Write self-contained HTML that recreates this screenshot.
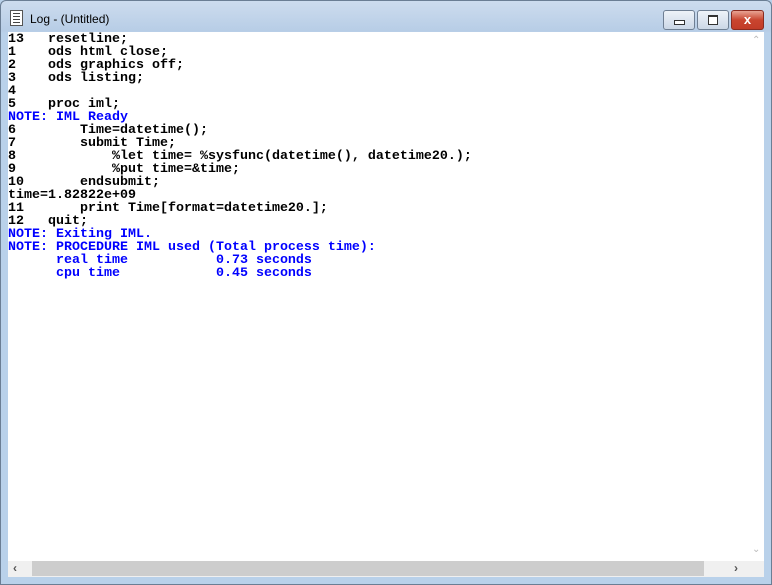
<!DOCTYPE html>
<html><head><style>
body{margin:0;width:772px;height:585px;overflow:hidden;background:#b9d1ea;position:relative;font-family:"Liberation Sans",sans-serif}
.frame{position:absolute;left:0;top:0;width:770px;height:583px;border:1px solid #6b7e94;border-radius:6px 6px 0 0;background:linear-gradient(#cddcee 0,#b7cde6 30px,#b9d1ea 32px)}
.title{position:absolute;left:30px;top:12px;font-size:12px;color:#000}
.ico{position:absolute;left:10px;top:10px;width:11px;height:14px;background:#fff;border:1px solid #555}
.ico i{position:absolute;left:2px;width:7px;height:1px;background:#444}
.btn{position:absolute;top:10px;height:18px;border:1px solid #6f7f93;border-radius:3px;background:linear-gradient(#eef3f9,#cbd7e6)}
.content{position:absolute;left:8px;top:32px;width:740px;height:529px;background:#fff}
pre{margin:0;position:absolute;left:8px;top:33px;font-family:"Liberation Mono",monospace;font-size:13.33px;line-height:13px;color:#000;font-weight:bold}
.b{color:#0000ff}
.vs{position:absolute;left:748px;top:32px;width:16px;height:529px;background:#fff}
.hs{position:absolute;left:8px;top:561px;width:740px;height:16px;background:#f0f0f0}
.thumb{position:absolute;left:24px;top:0;width:672px;height:15px;background:#cdcdcd}
.corner{position:absolute;left:748px;top:561px;width:16px;height:16px;background:#f0f0f0}
</style></head><body>
<div class="frame"></div>
<div class="ico"><i style="top:2px"></i><i style="top:5px"></i><i style="top:8px"></i><i style="top:11px"></i></div>
<div class="title">Log - (Untitled)</div>
<div class="btn" style="left:663px;width:30px"><div style="position:absolute;left:10px;top:9px;width:9px;height:3px;border:1px solid #333;background:#fff"></div></div>
<div class="btn" style="left:697px;width:30px"><div style="position:absolute;left:10px;top:4px;width:8px;height:7px;border:1px solid #333;border-top-width:2px;background:#fff"></div></div>
<div class="btn" style="left:731px;width:31px;border-color:#8a2b20;background:linear-gradient(#e8a393,#c9452f 50%,#c23c28)"><div style="position:absolute;left:0;right:0;top:0;text-align:center;color:#fff;font-weight:bold;font-size:13px;line-height:17px">x</div></div>
<div class="content"></div>
<pre>13   resetline;
1    ods html close;
2    ods graphics off;
3    ods listing;
4
5    proc iml;
<span class="b">NOTE: IML Ready</span>
6        Time=datetime();
7        submit Time;
8            %let time= %sysfunc(datetime(), datetime20.);
9            %put time=&amp;time;
10       endsubmit;
time=1.82822e+09
11       print Time[format=datetime20.];
12   quit;
<span class="b">NOTE: Exiting IML.
NOTE: PROCEDURE IML used (Total process time):
      real time           0.73 seconds
      cpu time            0.45 seconds</span>
</pre>
<div class="vs"><div style="position:absolute;left:4px;top:3px;color:#bbb;font-size:10px">&#8963;</div><div style="position:absolute;left:4px;top:512px;color:#bbb;font-size:10px">&#8964;</div></div>
<div class="hs"><div style="position:absolute;left:5px;top:0;color:#555;font-size:12px;font-weight:bold">&#8249;</div><div class="thumb"></div><div style="position:absolute;left:726px;top:0;color:#555;font-size:12px;font-weight:bold">&#8250;</div></div>
<div class="corner"></div>
</body></html>
